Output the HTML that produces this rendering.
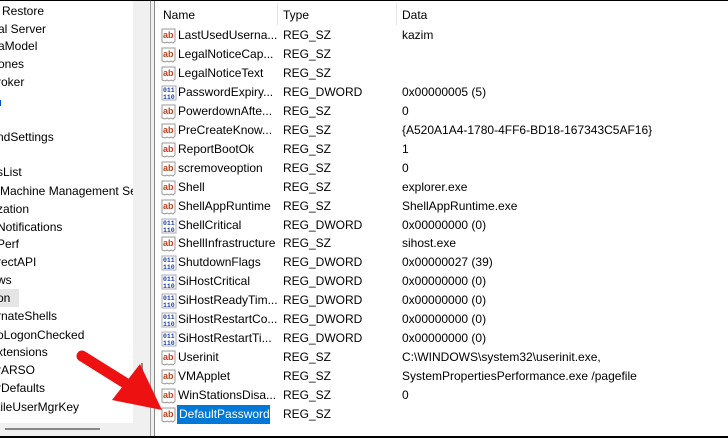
<!DOCTYPE html>
<html><head><meta charset="utf-8"><style>
body{margin:0;width:728px;height:438px;overflow:hidden;background:#f0f0f0;font-family:"Liberation Sans",sans-serif;font-size:12px;color:#000;position:relative}
.a{position:absolute;white-space:nowrap}
#left{position:absolute;left:0;top:0;width:133px;height:423px;background:#fff;overflow:hidden}
#right{position:absolute;left:155px;top:0;width:573px;height:438px;background:#fff}
.row{position:absolute;left:0;height:19px;line-height:19px;width:573px}
.row svg{position:absolute;left:6px;top:2px}
.n{position:absolute;left:23px}.t{position:absolute;left:128px}.d{position:absolute;left:247px}
</style></head><body>
<div id="left">
<div class="a" style="left:2px;top:4px">Restore</div>
<div class="a" style="left:-2px;top:22px">al Server</div>
<div class="a" style="left:-2px;top:39px">aModel</div>
<div class="a" style="left:-2px;top:57px">ones</div>
<div class="a" style="left:-3px;top:75px">roker</div>
<div class="a" style="left:0;top:100px;width:1px;height:6px;background:#0050c0"></div>
<div class="a" style="left:-3px;top:130px">ndSettings</div>
<div class="a" style="left:-3px;top:165px">sList</div>
<div class="a" style="left:0px;top:184px">Machine Management Se</div>
<div class="a" style="left:-3px;top:202px">zation</div>
<div class="a" style="left:-3px;top:220px">Notifications</div>
<div class="a" style="left:-3px;top:237px">Perf</div>
<div class="a" style="left:-3px;top:255px">rectAPI</div>
<div class="a" style="left:-3px;top:273px">ws</div>
<div class="a" style="left:0;top:289px;width:19px;height:18px;background:#e5e5e5"></div>
<div class="a" style="left:-3px;top:291px">on</div>
<div class="a" style="left:-3px;top:309px">rnateShells</div>
<div class="a" style="left:-3px;top:328px">oLogonChecked</div>
<div class="a" style="left:-3px;top:345px">xtensions</div>
<div class="a" style="left:-3px;top:363px">rARSO</div>
<div class="a" style="left:-3px;top:381px">rDefaults</div>
<div class="a" style="left:-3px;top:400px">tileUserMgrKey</div>
</div>
<div class="a" style="left:141px;top:363px;width:2px;height:15px;background:#888"></div>
<div class="a" style="left:5px;top:428px;width:95px;height:2px;background:#888"></div>
<div class="a" style="left:150px;top:0;width:1px;height:438px;background:#a0a0a0"></div>
<div class="a" style="left:154px;top:0;width:1px;height:438px;background:#888"></div>
<div id="right">
<div class="a" style="left:8px;top:8px">Name</div>
<div class="a" style="left:122px;top:3px;width:1px;height:22px;background:#e5e5e5"></div>
<div class="a" style="left:128px;top:8px">Type</div>
<div class="a" style="left:241px;top:3px;width:1px;height:22px;background:#e5e5e5"></div>
<div class="a" style="left:247px;top:8px">Data</div>
<div id="rows"></div>
</div>
<div class="a" style="left:0;top:0;width:728px;height:1px;background:#000"></div>
<div class="a" style="left:0;top:436px;width:728px;height:2px;background:#000"></div>
<svg class="a" style="left:0;top:0" width="728" height="438"><line x1="82" y1="356" x2="130" y2="386" stroke="#ee1111" stroke-width="11" stroke-linecap="round"/><polygon points="162,410 112,400 140,364" fill="#ee1111"/></svg>
<script>
var ab='<svg width="16" height="16" viewBox="0 0 16 16"><path d="M1 1h13v12l-2 2-2-1-2 1-2-1-2 1-3-1z" fill="#fff" stroke="#999"/><text x="2" y="10" font-size="9" font-weight="bold" fill="#c0401a" font-family="Liberation Sans">ab</text></svg>';
var dw='<svg width="16" height="16" viewBox="0 0 16 16"><rect x="1" y="1" width="14" height="14" fill="#fff" stroke="#aab"/><text x="2" y="7" font-size="6.5" font-weight="bold" fill="#2040a0" font-family="Liberation Mono">011</text><text x="2" y="14" font-size="6.5" font-weight="bold" fill="#2040a0" font-family="Liberation Mono">110</text></svg>';
var R=[["LastUsedUserna...","REG_SZ","kazim"],["LegalNoticeCap...","REG_SZ",""],["LegalNoticeText","REG_SZ",""],["PasswordExpiry...","REG_DWORD","0x00000005 (5)"],["PowerdownAfte...","REG_SZ","0"],["PreCreateKnow...","REG_SZ","{A520A1A4-1780-4FF6-BD18-167343C5AF16}"],["ReportBootOk","REG_SZ","1"],["scremoveoption","REG_SZ","0"],["Shell","REG_SZ","explorer.exe"],["ShellAppRuntime","REG_SZ","ShellAppRuntime.exe"],["ShellCritical","REG_DWORD","0x00000000 (0)"],["ShellInfrastructure","REG_SZ","sihost.exe"],["ShutdownFlags","REG_DWORD","0x00000027 (39)"],["SiHostCritical","REG_DWORD","0x00000000 (0)"],["SiHostReadyTim...","REG_DWORD","0x00000000 (0)"],["SiHostRestartCo...","REG_DWORD","0x00000000 (0)"],["SiHostRestartTi...","REG_DWORD","0x00000000 (0)"],["Userinit","REG_SZ","C:\\WINDOWS\\system32\\userinit.exe,"],["VMApplet","REG_SZ","SystemPropertiesPerformance.exe /pagefile"],["WinStationsDisa...","REG_SZ","0"],["DefaultPassword","REG_SZ",""]];
var h='';R.forEach(function(r,i){var y=Math.round(26+18.95*i);var sel=i==20;
h+='<div class="row" style="top:'+y+'px">'+(r[1]=="REG_SZ"?ab:dw)+(sel?'<div class="a" style="left:22px;top:0;width:93px;height:19px;background:#0078d7"></div>':'')+'<span class="n" style="'+(sel?'color:#fff;left:24px':'')+'">'+r[0]+'</span><span class="t">'+r[1]+'</span><span class="d">'+r[2]+'</span></div>';});
document.getElementById('rows').innerHTML=h;
</script>
</body></html>
